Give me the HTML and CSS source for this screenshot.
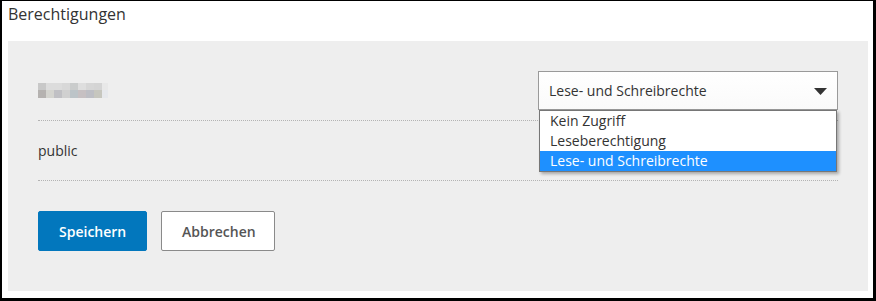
FILE: index.html
```html
<!DOCTYPE html>
<html lang="de">
<head>
    <meta charset="UTF-8">
    <meta name="viewport" content="width=device-width, initial-scale=1.0">
    <title>Berechtigungen</title>
    <link rel="stylesheet" href="styles.css">
</head>
<body>
    <div class="frame">
        <div class="titel">Berechtigungen</div>

        <div class="panel">
            <div class="zeile">
                <div class="verwischt"></div>
                <div class="auswahl">
                    <span>Lese- und Schreibrechte</span>
                    <svg class="pfeil" width="13" height="7" viewBox="0 0 13 7">
                        <polygon points="0,0 13,0 6.5,7" fill="#333"/>
                    </svg>
                    <ul class="liste">
                        <li>Kein Zugriff</li>
                        <li>Leseberechtigung</li>
                        <li class="aktiv">Lese- und Schreibrechte</li>
                    </ul>
                </div>
            </div>
            <div class="zeile">
                <span class="name">public</span>
            </div>

            <div class="knoepfe">
                <button class="btn btn-speichern">Speichern</button>
                <button class="btn btn-abbrechen">Abbrechen</button>
            </div>
        </div>
    </div>
</body>
</html>
```

FILE: styles.css
```css
html, body {
    margin: 0;
    padding: 0;
    background: #fff;
}
.frame {
    box-sizing: border-box;
    width: 876px;
    height: 301px;
    border-style: solid;
    border-color: #000;
    border-width: 1px 3px 3px 2px;
    font-family: "Open Sans", "Liberation Sans", Arial, sans-serif;
    color: #333;
}
.titel {
    font-size: 16px;
    line-height: 22px;
    padding: 2px 6px 0;
}
.panel {
    margin: 16px 5px 0 6px;
    height: 250px;
    box-sizing: border-box;
    background: #eeeeee;
    padding: 20px 30px 0;
}
.zeile {
    display: flex;
    justify-content: space-between;
    align-items: center;
    height: 60px;
    box-sizing: border-box;
    padding: 10px 0;
    border-bottom: 1px dotted #b3b3b3;
    font-size: 14px;
}
.verwischt {
    width: 70px;
    height: 15px;
    background:
        linear-gradient(to right, #c8c8c8 0 8px, #dcdcdc 8px 16px, #dcdcdc 16px 24px, #d8d8d8 24px 32px, #cacccc 32px 40px, #dedede 40px 48px, #d6d6d6 48px 56px, #d4d4d4 56px 64px, #e8e8e8 64px) top / 100% 7px no-repeat,
        linear-gradient(to right, #b5b2b0 0 8px, #d4d4cf 8px 16px, #c0c0c4 16px 24px, #d0d0d0 24px 32px, #bcc4c8 32px 40px, #c6c0c2 40px 48px, #bdbec4 48px 56px, #c6c6be 56px 64px, #e6e8ec 64px) bottom / 100% 8px no-repeat;
}
.auswahl {
    position: relative;
    box-sizing: border-box;
    width: 300px;
    height: 39px;
    border: 1px solid #9a9a9a;
    background: linear-gradient(#fff, #fafafa);
    display: flex;
    align-items: center;
    justify-content: space-between;
    padding: 0 10px;
}
.pfeil {
    display: block;
    margin-top: 2px;
}
.liste {
    position: absolute;
    left: 0;
    top: 38px;
    width: 298px;
    box-sizing: border-box;
    margin: 0;
    padding: 0;
    list-style: none;
    background: #fff;
    border: 1px solid #767676;
    box-shadow: 2px 2px 3px rgba(0, 0, 0, 0.3);
}
.liste li {
    height: 20px;
    line-height: 20px;
    padding-left: 10px;
    font-size: 14px;
    color: #333;
}
.liste li.aktiv {
    background: #1e90ff;
    color: #fff;
}
.name {
    color: #333;
}
.knoepfe {
    display: flex;
    gap: 14px;
    padding-top: 30px;
}
.btn {
    height: 40px;
    border-radius: 2px;
    font-family: "Open Sans", "Liberation Sans", Arial, sans-serif;
    font-size: 14px;
    font-weight: 600;
    padding: 0 20px;
    cursor: pointer;
}
.btn-speichern {
    background: #0277bd;
    border: 1px solid #0277bd;
    color: #fff;
    width: 109px;
}
.btn-abbrechen {
    background: #fff;
    border: 1px solid #8a8a8a;
    color: #555;
    width: 114px;
}
```
